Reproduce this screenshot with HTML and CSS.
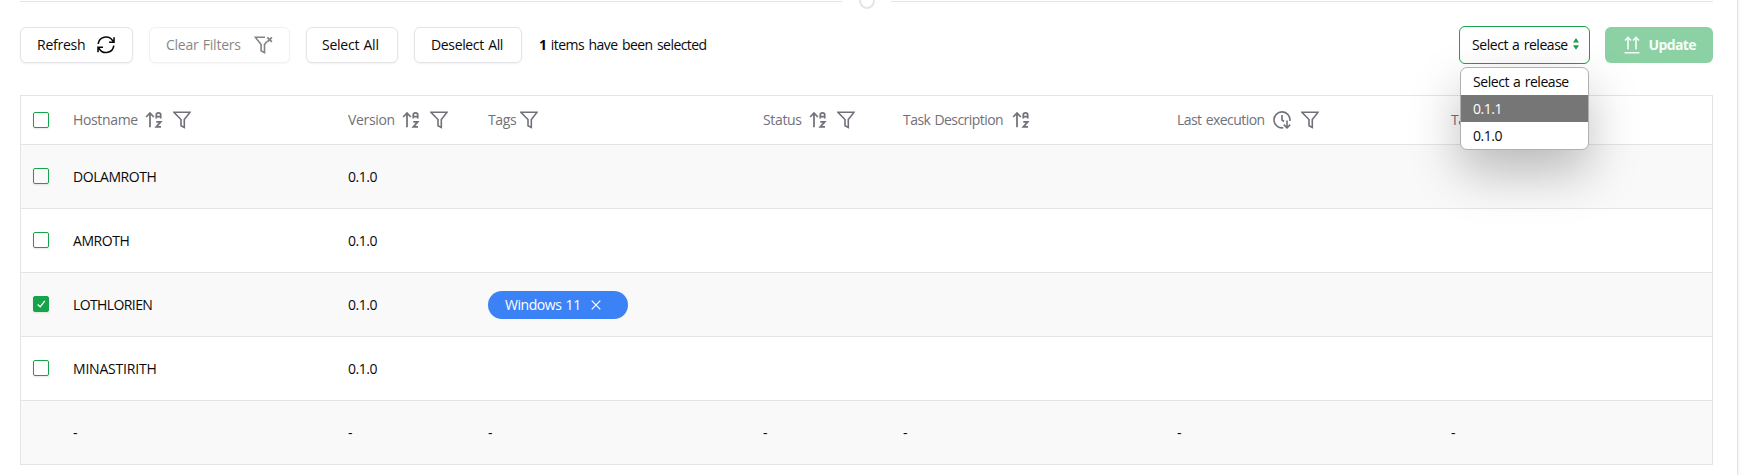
FILE: index.html
```html
<!DOCTYPE html>
<html lang="en">
<head>
<meta charset="utf-8">
<title>Releases</title>
<link rel="stylesheet" href="styles.css">
</head>
<body>
<svg class="defs" aria-hidden="true">
  <symbol id="sort" viewBox="0 0 18 18"><path d="M5 16.300V2.200M1.200 6 5 2l3.800 4M11.300 7.600V3.700q0-1.900 2.200-1.900t2.200 1.900v3.900M11.300 5.500h4.400M11.300 10.800h4.400l-4.400 5h4.700" fill="none" stroke="currentColor" stroke-width="1.750"/></symbol>
  <symbol id="filter" viewBox="0 0 18 18"><path d="M.9 1.200h16.200l-5.800 7.300v7.900l-3.300-1.700V8.500z" fill="none" stroke="currentColor" stroke-width="1.600"/></symbol>
</svg>
<main class="panel">
  <div class="divider"><span class="line"></span><span class="ring"></span><span class="line"></span></div>
  <div class="toolbar">
    <button class="btn refresh"><span>Refresh</span>
      <svg width="20" height="20" viewBox="0 0 20 20"><path d="M18 2.200v5h-5M2 17.300v-5h5M2.200 9A7.900 7.900 0 0 1 16.600 5.600L18 7.200M17.800 10.600A7.900 7.900 0 0 1 3.400 14L2 12.300" fill="none" stroke="currentColor" stroke-width="1.600"/></svg>
    </button>
    <button class="btn clear" disabled><span>Clear Filters</span>
      <svg width="19" height="18" viewBox="0 0 19 18"><path d="M11 1.200H1.300l5.800 7.300v6.300l3.400 1.800V8.500l2.300-2.900" fill="none" stroke="currentColor" stroke-width="1.600"/><path d="m13.300 1.300 4.600 4.600m0-4.600-4.600 4.600" stroke="currentColor" stroke-width="1.700"/></svg>
    </button>
    <button class="btn all"><span>Select All</span></button>
    <button class="btn none"><span>Deselect All</span></button>
    <p class="count"><b>1</b> items have been selected</p>
    <div class="release">
      <div class="select"><span>Select a release</span>
        <svg width="6" height="12" viewBox="0 0 6 12"><path d="M3 0 6 4.600H0zM0 7.200h6L3 11.800z" fill="currentColor"/></svg>
      </div>
      <ul class="menu"><li>Select a release</li><li class="active">0.1.1</li><li>0.1.0</li></ul>
    </div>
    <button class="update" disabled>
      <svg width="16" height="18" viewBox="0 0 16 18"><path d="M4 13.500V1.500M1 4.500l3-3 3 3M12 13.500V1.500M9 4.500l3-3 3 3M.5 16.800h15" fill="none" stroke="currentColor" stroke-width="1.600"/></svg>
      <span>Update</span>
    </button>
  </div>
  <div class="table">
    <div class="row head">
      <i class="box"></i>
      <div class="cell"><span class="hostname">Hostname</span><svg class="icon sort"><use href="#sort"/></svg><svg class="icon filter"><use href="#filter"/></svg></div>
      <div class="cell"><span class="version">Version</span><svg class="icon sort"><use href="#sort"/></svg><svg class="icon filter"><use href="#filter"/></svg></div>
      <div class="cell"><span class="tags">Tags</span><svg class="icon only"><use href="#filter"/></svg></div>
      <div class="cell"><span class="status">Status</span><svg class="icon sort"><use href="#sort"/></svg><svg class="icon filter"><use href="#filter"/></svg></div>
      <div class="cell"><span class="description">Task Description</span><svg class="icon sort"><use href="#sort"/></svg></div>
      <div class="cell"><span class="execution">Last execution</span>
        <svg class="icon clock" viewBox="0 0 18 18"><path d="M10.300 16.800A8 8 0 1 1 16.900 10M9 4v5l2 1.500M14 9.500v7M10.800 13.600l3.200 3.200 3.200-3.200" fill="none" stroke="currentColor" stroke-width="1.600"/></svg>
        <svg class="icon filter"><use href="#filter"/></svg></div>
      <div class="cell"><span>Task</span></div>
    </div>
    <div class="row odd"><i class="box"></i><div class="cell">DOLAMROTH</div><div class="cell">0.1.0</div></div>
    <div class="row"><i class="box"></i><div class="cell">AMROTH</div><div class="cell">0.1.0</div></div>
    <div class="row odd"><i class="box checked"><svg width="14" height="14" viewBox="0 0 14 14"><path d="m3.700 7.500 2.500 2.400 4.600-6" fill="none" stroke="#fff" stroke-width="1.300"/></svg></i><div class="cell tight">LOTHLORIEN</div><div class="cell">0.1.0</div>
      <div class="cell"><span class="chip"><span>Windows 11</span><svg width="10" height="10" viewBox="0 0 10 10"><path d="m.7.700 8.600 8.600M9.300.700.7 9.300" stroke="currentColor" stroke-width="1.200"/></svg></span></div></div>
    <div class="row"><i class="box"></i><div class="cell wide">MINASTIRITH</div><div class="cell">0.1.0</div></div>
    <div class="row odd"><i></i><div class="cell">-</div><div class="cell">-</div><div class="cell">-</div><div class="cell">-</div><div class="cell">-</div><div class="cell">-</div><div class="cell">-</div></div>
  </div>
</main>
</body>
</html>
```

FILE: styles.css
```css
* { box-sizing: border-box; }
body {
  margin: 0;
  height: 475px;
  overflow: hidden;
  background: #fff;
  color: #09090b;
  font: 14px/20px "Open Sans", "Noto Sans", sans-serif;
  letter-spacing: -0.45px;
  word-spacing: 1px;
}
.defs { position: absolute; width: 0; height: 0; }
svg { flex: none; display: block; }
.panel {
  display: flow-root;
  width: 1738px;
  height: 475px;
  padding: 0 24px 0 20px;
  border-right: 1px solid #e4e4e7;
  box-shadow: 1px 0 2px rgba(0, 0, 0, .06);
}
.divider {
  display: flex;
  justify-content: space-between;
  align-items: center;
  height: 17px;
  margin-top: -8px;
}
.line { width: 822px; height: 1px; margin-top: 2px; background: #e4e4e7; }
.ring { width: 16px; height: 17px; border: 2px solid #e4e4e7; border-radius: 50%; }
.toolbar { display: flex; height: 36px; margin-top: 18px; }
.btn {
  display: flex;
  align-items: center;
  height: 36px;
  margin: 0 16px 0 0;
  padding: 0 16px;
  border: 1px solid #e4e4e7;
  border-radius: 6px;
  background: #fff;
  box-shadow: 0 1px 2px rgba(0, 0, 0, .06);
  color: #09090b;
  font: 500 14px/20px "Open Sans", sans-serif;
  letter-spacing: -0.25px;
  word-spacing: 1px;
  white-space: nowrap;
}
.btn svg { margin-left: auto; }
.refresh { width: 113px; }
.clear { width: 141px; opacity: .5; }
.all { width: 92px; padding: 0 15px; }
.none { width: 108px; letter-spacing: -0.35px; }
.count { margin: 8px 0 0 1px; letter-spacing: -0.55px; word-spacing: 1.3px; }
.release { position: relative; width: 131px; height: 38px; margin: -1px 15px 0 auto; }
.select {
  display: flex;
  align-items: center;
  height: 38px;
  padding: 0 10px 0 12px;
  border: 1px solid #16a34a;
  border-radius: 6px;
  background: #fff;
}
.select svg { margin: -2px 0 0 auto; color: #16a34a; }
.menu {
  position: absolute;
  z-index: 2;
  top: 41px;
  left: 1px;
  width: 129px;
  margin: 0;
  padding: 0;
  overflow: hidden;
  list-style: none;
  border: 1px solid #b0b0b0;
  border-radius: 7px;
  background: #fff;
  box-shadow: 0 22px 50px rgba(0, 0, 0, .26);
}
.menu li { height: 27px; padding: 4px 12px; line-height: 20px; white-space: nowrap; }
.menu .active { background: #767676; color: #fff; }
.update {
  display: flex;
  align-items: center;
  width: 108px;
  height: 36px;
  padding: 0 17px 0 19px;
  border: 0;
  border-radius: 6px;
  background: #8bd1a4;
  color: #f9fdfa;
  font: 700 14px/20px "Open Sans", sans-serif;
  letter-spacing: -0.6px;
}
.update span { margin-left: auto; }
.table { margin-top: 32px; border: 1px solid #e4e4e7; border-bottom: 0; }
.row {
  display: grid;
  grid-template-columns: 52px 275px 140px 275px 140px 274px 274px 1fr;
  align-items: center;
  height: 64px;
  border-bottom: 1px solid #e4e4e7;
}
.head { height: 49px; color: #71717a; }
.odd { background: #f9f9f9; }
.cell { display: flex; align-items: center; min-width: 0; white-space: nowrap; }
.head .cell { letter-spacing: -0.35px; }
.tight { letter-spacing: -0.6px; }
.wide { letter-spacing: -0.2px; }
.icon { width: 18px; height: 18px; }
.sort { margin-left: 8px; }
.filter { margin-left: 10px; }
.only { margin-left: 4px; }
.clock { margin-left: 8px; }
.hostname { width: 64px; }
.version { width: 46px; }
.tags { width: 28px; }
.status { width: 38px; }
.head .description { width: 101px; letter-spacing: -0.55px; }
.head .execution { width: 88px; letter-spacing: -0.55px; }
.box {
  width: 16px;
  height: 16px;
  margin: -1px 0 0 12px;
  border: 1px solid #16a34a;
  border-radius: 2px;
  box-shadow: 0 1px 2px rgba(0, 0, 0, .1);
}
.head .box { margin-top: 0; }
.checked { background: #16a34a; }
.chip {
  display: flex;
  align-items: center;
  width: 140px;
  height: 28px;
  padding-left: 17px;
  border-radius: 14px;
  background: #3b82f6;
  color: #fff;
}
.chip > span { width: 86px; }
```
